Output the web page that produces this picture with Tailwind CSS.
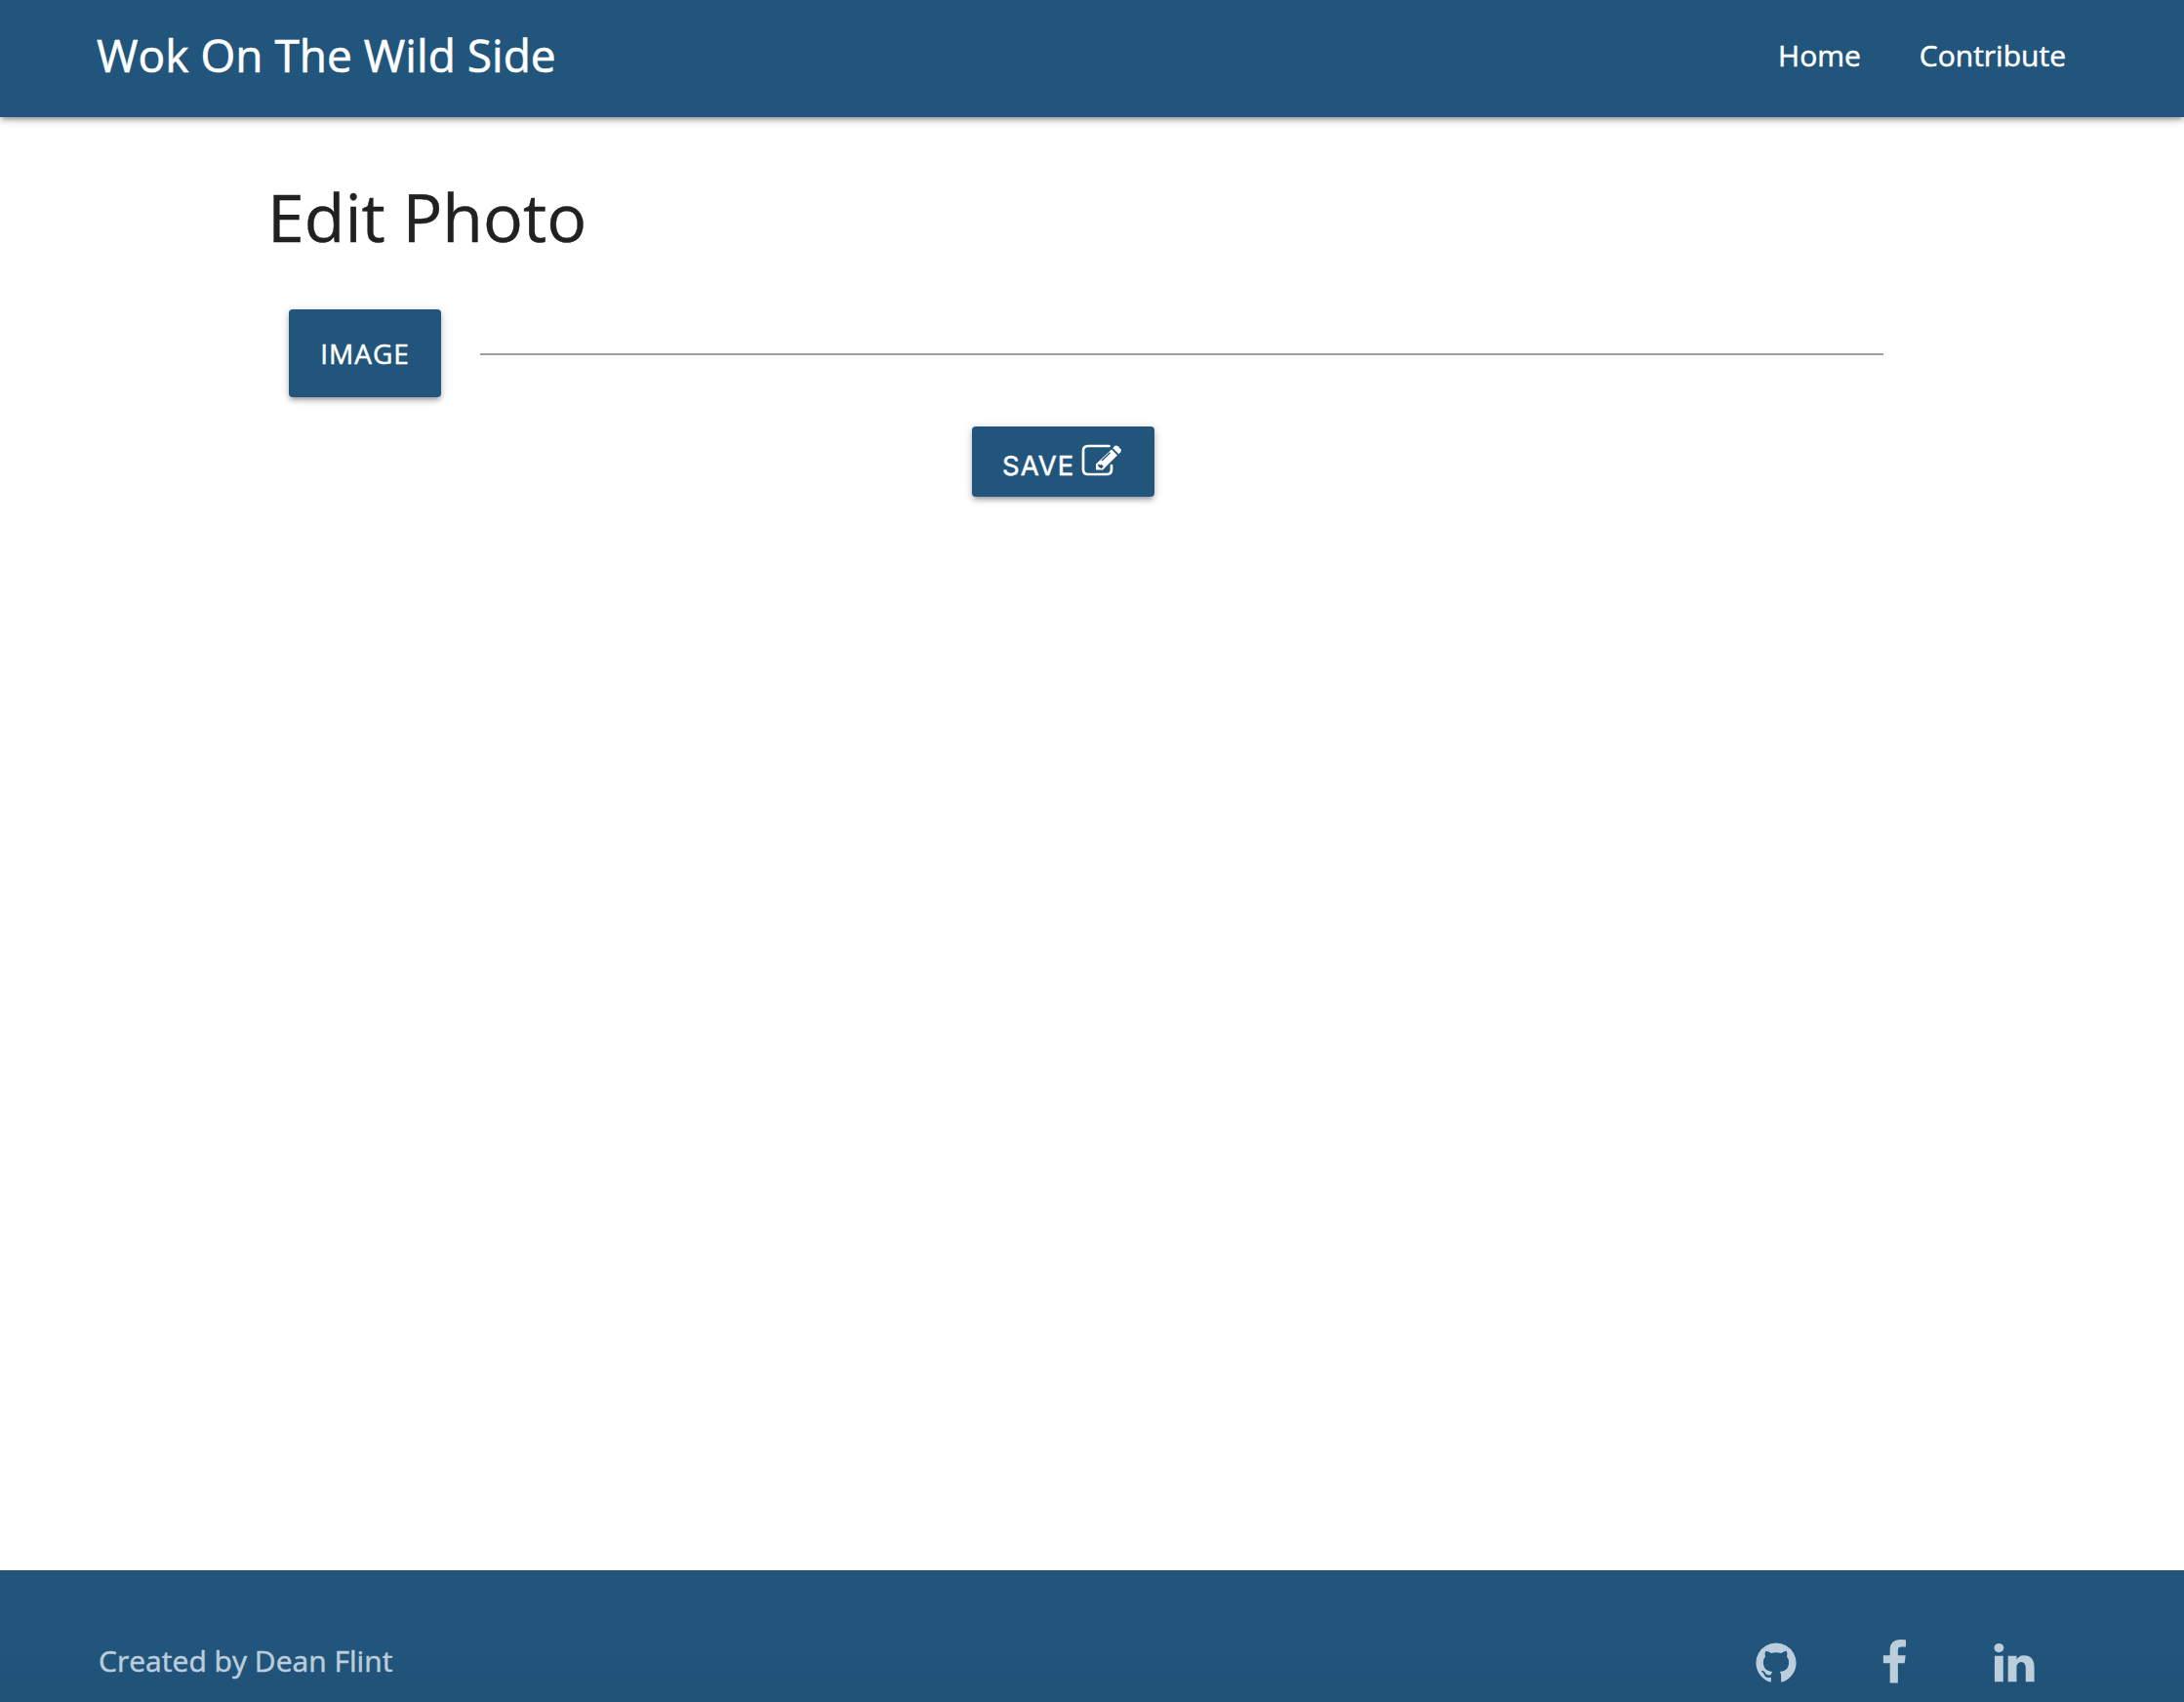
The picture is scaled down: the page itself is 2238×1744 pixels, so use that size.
<!DOCTYPE html>
<html lang="en">
<head>
<meta charset="utf-8">
<title>Wok On The Wild Side</title>
<script src="https://cdn.jsdelivr.net/npm/@tailwindcss/browser@4"></script>
</head>
<body class="flex h-[1744px] w-[2238px] flex-col overflow-hidden bg-white font-['Open_Sans',sans-serif] text-[#212121]">
  <header class="flex h-[120px] shrink-0 items-center justify-between bg-[#21557c] pr-[121px] pb-[6px] pl-[99px] text-white shadow-[0_4px_4px_0_rgba(0,0,0,0.14),0_6px_2px_-4px_rgba(0,0,0,0.12),0_2px_10px_0_rgba(0,0,0,0.2)]">
    <a class="mb-[2px] text-[46px] leading-none tracking-[0.03px] whitespace-nowrap [-webkit-text-stroke:0.6px]">Wok On The Wild Side</a>
    <nav class="flex gap-[60px] text-[30px] leading-none [-webkit-text-stroke:0.5px]">
      <a>Home</a>
      <a>Contribute</a>
    </nav>
  </header>
  <main class="flex flex-1 flex-col px-[274px] pt-[61px]">
    <h1 class="text-[68px] leading-[82px] [-webkit-text-stroke:0.4px]">Edit Photo</h1>
    <form class="flex flex-col">
      <div class="mt-[54px] ml-[22px] flex items-center">
        <button type="button" class="flex h-[90px] w-[156px] items-center justify-center rounded-[4px] bg-[#21557c] text-[28px] tracking-[1px] text-white [-webkit-text-stroke:0.5px] shadow-[0_4px_4px_0_rgba(0,0,0,0.14),0_6px_2px_-4px_rgba(0,0,0,0.12),0_2px_10px_0_rgba(0,0,0,0.2)]">IMAGE</button>
        <div class="mt-[2px] ml-[40px] h-[2px] w-[1438px] bg-[#9e9e9e]"></div>
      </div>
      <button type="button" class="mt-[30px] ml-[722px] flex h-[72px] w-[187px] rounded-[4px] bg-[#21557c] pl-[31px] text-white shadow-[0_4px_4px_0_rgba(0,0,0,0.14),0_6px_2px_-4px_rgba(0,0,0,0.12),0_2px_10px_0_rgba(0,0,0,0.2)]">
        <span class="mt-[4px] w-[81px] text-left font-['Inter',sans-serif] text-[27.5px] leading-[72px] tracking-[1px] [-webkit-text-stroke:0.5px]">SAVE</span>
        <svg class="mt-[18px] h-[34px] w-[42px]" viewBox="0 0 42 34" fill="none">
          <path d="M28.500 2H7Q2 2 2 7V26Q2 31 7 31H26Q31 31 31 26V22" stroke="#fff" stroke-width="2.700" stroke-linecap="round"/>
          <path d="M31 5.500 37 11.500 22 26.500H15V20.500Z" fill="#fff"/>
          <path d="M32.300 4.200 34 2.300Q35.500 .8 37.500 2.300L40.500 5.300Q41.500 7 40.300 8.300L38.400 10.300Z" fill="#fff"/>
          <path d="M21 17 29.500 8.700" stroke="#21557c" stroke-width="1.300"/>
          <path d="M17.300 20.500 19.500 21.500 20.500 20.800 22.800 23 20.500 25.300 17.300 22.800Z" fill="#21557c"/>
        </svg>
      </button>
    </form>
  </main>
  <footer class="flex h-[135px] shrink-0 items-start justify-between bg-linear-to-b from-[#21557c] from-60% to-[#205177] pr-[150px] pl-[101px] text-[#bccddb]">
    <p class="mt-[73px] text-[30px] leading-[40px] tracking-[0.03px] [-webkit-text-stroke:0.5px]">Created by Dean Flint</p>
    <div class="mt-[71px] flex">
      <svg class="mr-[73px] size-[48px]" viewBox="0 0 1792 1792" fill="currentColor"><path d="M896 128q209 0 385.500 103t279.500 279.500 103 385.500q0 251-146.500 451.500t-378.500 277.500q-27 5-40-7t-13-30q0-3 .5-76.500t.5-134.500q0-97-52-142 57-6 102.500-18t94-39 81-66.500 53-105 20.500-150.500q0-119-79-206 37-91-8-204-28-9-81 11t-92 44l-38 24q-93-26-192-26t-192 26q-16-11-42.500-27t-83.500-38.500-85-13.500q-45 113-8 204-79 87-79 206 0 85 20.500 150t52.500 105 80.500 67 94 39 102.500 18q-39 36-49 103-21 10-45 15t-57 5-65.500-21.500-55.500-62.500q-19-32-48.500-52t-49.500-24l-20-3q-21 0-29 4.500t-5 11.500 9 14 13 12l7 5q22 10 43.500 38t31.500 51l10 23q13 38 44 61.500t67 30 69.500 7 55.500-3.500l23-4q0 38 .5 88.500t.5 54.500q0 18-13 30t-40 7q-232-77-378.500-277.500t-146.500-451.500q0-209 103-385.500t279.500-279.500 385.500-103z"/></svg>
      <svg class="mr-[75px] size-[48px]" viewBox="0 0 1792 1792" fill="currentColor"><path d="M1343 12v264h-157q-86 0-116 36t-30 108v189h293l-39 296h-254v759h-306v-759h-255v-296h255v-218q0-186 104-288.500t277-102.500q147 0 228 12z"/></svg>
      <svg class="size-[48px]" viewBox="0 0 1792 1792" fill="currentColor"><path d="M477 625v991h-330v-991h330zm21-306q1 73-50.500 122t-135.500 49h-2q-82 0-132-49t-50-122q0-74 51.500-122.500t134.500-48.500 133 48.500 51 122.500zm1166 729v568h-329v-530q0-105-40.500-164.500t-126.500-59.500q-63 0-105.500 34.500t-63.500 85.500q-11 30-11 81v553h-329q2-399 2-647t-1-296l-1-48h329v144h-2q20-32 41-56t56.500-52 87-43.500 114.500-15.500q171 0 275 113.500t104 332.500z"/></svg>
    </div>
  </footer>
</body>
</html>
